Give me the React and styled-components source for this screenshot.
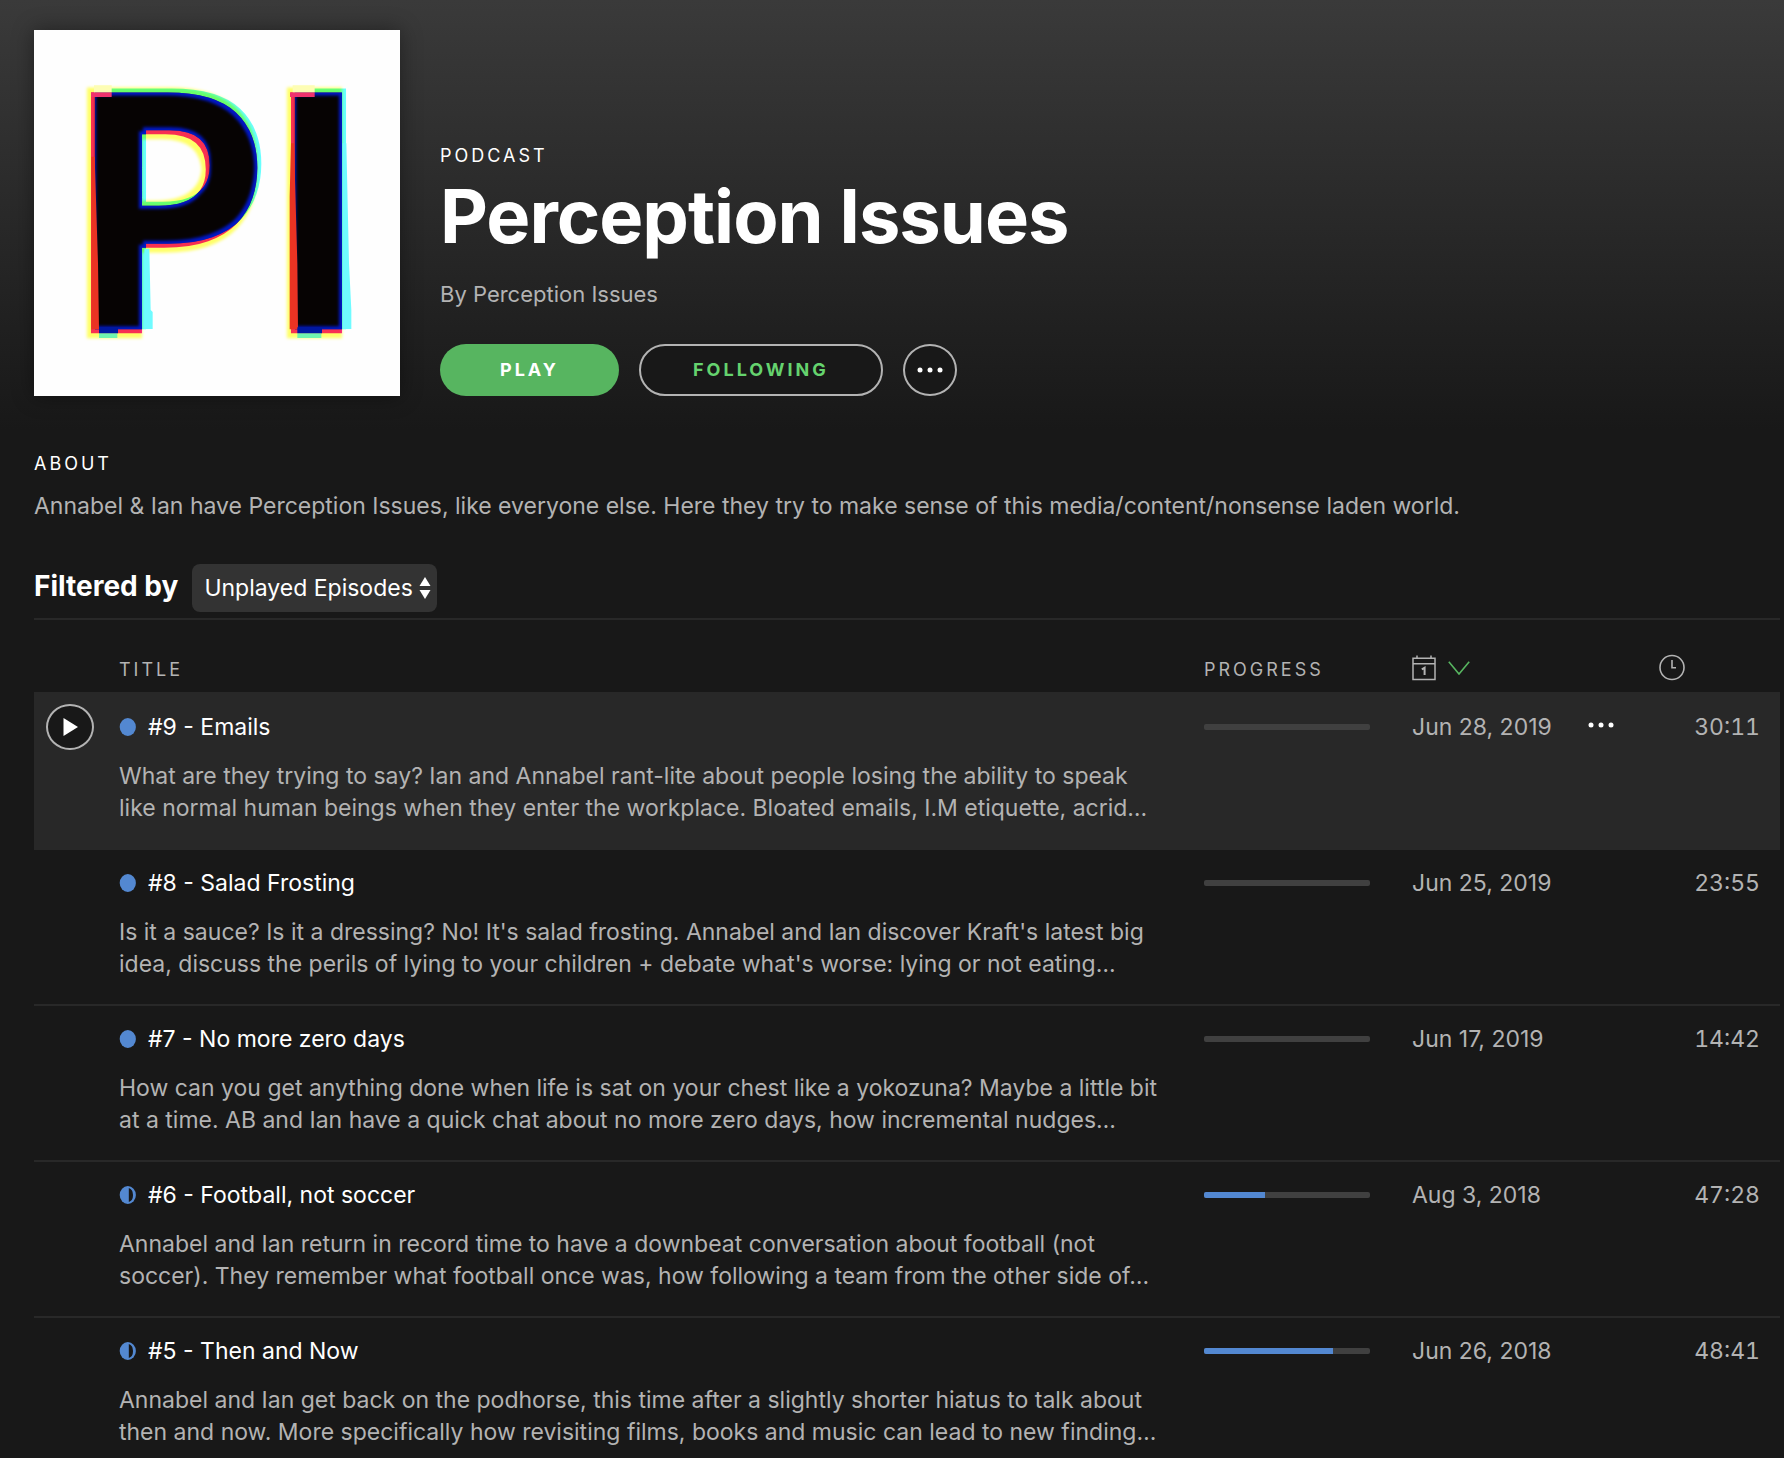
import React from 'react';
import styled, { createGlobalStyle } from 'styled-components';

const GlobalStyle = createGlobalStyle`
    * {
        box-sizing: border-box;
    }
    body {
        margin: 0;
        background-color: #181818;
        color: #b3b3b3;
        font-family: Inter, 'Liberation Sans', sans-serif;
        font-size: 23px;
        line-height: 32px;
    }
    h1, h2, p {
        margin: 0;
    }
    button, select {
        font: inherit;
        color: inherit;
        cursor: pointer;
    }
    svg {
        display: block;
    }
`;

const Page = styled.main`
    padding: 30px 4px 0 34px;
    background: linear-gradient(#3a3a3a, #181818 430px);
`;

const Header = styled.header`
    display: flex;
    align-items: flex-end;
    gap: 40px;
`;

const Artwork = styled.svg`
    width: 366px;
    height: 366px;
    flex: none;
    overflow: visible;
    background-color: #fefefe;
    box-shadow: 0 0 20px rgba(0, 0, 0, 0.4);
`;

const Monogram = styled.text`
    font-family: 'Open Sans', sans-serif;
    font-size: 1012px;
    font-weight: 700;
`;

const Label = styled.p`
    color: white;
    font-size: 18px;
    line-height: 24px;
    font-weight: 400;
    letter-spacing: 3px;
    text-transform: uppercase;
`;

const ShowTitle = styled.h1`
    margin-top: 4px;
    color: white;
    font-size: 74px;
    line-height: 88px;
    font-weight: 700;
    letter-spacing: -1px;
`;

const Author = styled.p`
    margin-top: 18px;
    font-size: 22px;
`;

const Actions = styled.div`
    display: flex;
    gap: 20px;
    margin-top: 34px;
`;

const PillButton = styled.button`
    height: 52px;
    padding: 0 ${(props) => (props.$outlined ? 52 : 60)}px;
    border: ${(props) => (props.$outlined ? '2px solid #b3b3b3' : 'none')};
    border-radius: 26px;
    background-color: ${(props) => (props.$outlined ? '#181818' : '#57b560')};
    color: ${(props) => (props.$outlined ? '#65d36e' : 'white')};
    font-size: 18px;
    font-weight: 700;
    letter-spacing: 3px;
    text-transform: uppercase;
`;

const RoundButton = styled.button`
    display: flex;
    align-items: center;
    justify-content: center;
    width: ${(props) => props.$width}px;
    height: ${(props) => props.$height}px;
    padding: 0;
    border: 2px solid #b3b3b3;
    border-radius: 50%;
    background-color: #181818;
    color: white;
`;

const PlainButton = styled.button`
    display: flex;
    align-items: center;
    height: 28px;
    padding: 0;
    border: none;
    background: none;
    color: white;
`;

const About = styled.section`
    margin-top: 56px;
`;

const AboutText = styled.p`
    margin-top: 14px;
`;

const FilterBar = styled.div`
    display: flex;
    align-items: baseline;
    gap: 14px;
    margin-top: 42px;
    padding-bottom: 6px;
    border-bottom: 2px solid #282828;
`;

const FilterLabel = styled.label`
    color: white;
    font-size: 28px;
    font-weight: 700;
`;

const SelectBox = styled.div`
    display: grid;
    align-items: center;
    justify-items: end;

    & > * {
        grid-area: 1 / 1;
    }
    & > svg {
        margin-right: 6px;
        pointer-events: none;
    }
`;

const Select = styled.select`
    appearance: none;
    height: 48px;
    padding: 0 24px 0 12px;
    border: none;
    border-radius: 8px;
    background-color: #333333;
    color: white;
`;

const Table = styled.table`
    width: 100%;
    table-layout: fixed;
    border-collapse: separate;
    border-spacing: 0;
`;

const Col = styled.col`
    width: ${(props) => props.$width};
`;

const HeadCell = styled.th`
    height: 72px;
    padding: 0 0 10px;
    vertical-align: bottom;
    text-align: left;
    font-size: 18px;
    line-height: 24px;
    font-weight: 400;
    letter-spacing: 3px;
    text-transform: uppercase;
`;

const SortButton = styled(PlainButton)`
    gap: 12px;
    color: #b3b3b3;
`;

const Row = styled.tr`
    background-color: ${(props) => (props.$active ? '#282828' : 'transparent')};
`;

const Cell = styled.td`
    height: 156px;
    padding: 17px 0 24px;
    border-top: 2px solid ${(props) => (props.$first ? 'transparent' : '#282828')};
    vertical-align: top;
`;

const PlayCell = styled(Cell)`
    padding: 10px 0 0 12px;
`;

const TimeCell = styled(Cell)`
    padding-right: 20px;
    text-align: right;
    font-variant-numeric: tabular-nums;
`;

const EpisodeTitle = styled.div`
    display: flex;
    align-items: center;
    gap: 12px;
    color: white;
`;

const Description = styled.p`
    margin-top: 17px;
    white-space: pre;
`;

const ProgressSlot = styled.div`
    display: flex;
    align-items: center;
    height: 32px;
`;

const Track = styled.div`
    width: 166px;
    height: 6px;
    border-radius: 2px;
    background-color: #404040;
    overflow: hidden;
`;

const Fill = styled.div`
    height: 100%;
    background-color: #5388d1;
`;

const episodes = [
    {
        title: '#9 - Emails',
        text: 'What are they trying to say? Ian and Annabel rant-lite about people losing the ability to speak\nlike normal human beings when they enter the workplace. Bloated emails, I.M etiquette, acrid…',
        progress: 0,
        date: 'Jun 28, 2019',
        time: '30:11',
        active: true,
    },
    {
        title: '#8 - Salad Frosting',
        text: "Is it a sauce? Is it a dressing? No! It's salad frosting. Annabel and Ian discover Kraft's latest big\nidea, discuss the perils of lying to your children + debate what's worse: lying or not eating…",
        progress: 0,
        date: 'Jun 25, 2019',
        time: '23:55',
    },
    {
        title: '#7 - No more zero days',
        text: 'How can you get anything done when life is sat on your chest like a yokozuna? Maybe a little bit\nat a time. AB and Ian have a quick chat about no more zero days, how incremental nudges…',
        progress: 0,
        date: 'Jun 17, 2019',
        time: '14:42',
    },
    {
        title: '#6 - Football, not soccer',
        text: 'Annabel and Ian return in record time to have a downbeat conversation about football (not\nsoccer). They remember what football once was, how following a team from the other side of…',
        progress: 37,
        date: 'Aug 3, 2018',
        time: '47:28',
    },
    {
        title: '#5 - Then and Now',
        text: 'Annabel and Ian get back on the podhorse, this time after a slightly shorter hiatus to talk about\nthen and now. More specifically how revisiting films, books and music can lead to new finding…',
        progress: 78,
        date: 'Jun 26, 2018',
        time: '48:41',
    },
];

// The filter prints the letters in yellow, magenta and cyan, slightly out of register
const CoverArt = () => (
    <Artwork viewBox="0 0 1098 1098" role="img" aria-label="Perception Issues cover">
        <filter
            id="misprint"
            filterUnits="userSpaceOnUse"
            x="0"
            y="0"
            width="1098"
            height="1098"
            colorInterpolationFilters="sRGB"
        >
            <feMorphology in="SourceAlpha" operator="dilate" radius="6 16" result="grown" />
            <feOffset in="grown" dx="-5" result="grownLeft" />
            <feGaussianBlur in="grownLeft" stdDeviation="4" result="glow" />
            <feFlood floodColor="#ffff68" />
            <feComposite in2="glow" operator="in" result="yellow" />

            <feFlood floodColor="#f830c8" />
            <feComposite in2="SourceAlpha" operator="in" result="magenta" />

            <feOffset in="SourceAlpha" dx="13" dy="-13" result="shifted" />
            <feFlood floodColor="#68ffff" />
            <feComposite in2="shifted" operator="in" result="cyan" />

            <feComposite in="SourceAlpha" in2="shifted" operator="in" result="overlap" />
            <feFlood floodColor="#0018c8" />
            <feComposite in2="overlap" operator="in" result="blue" />

            <feMorphology in="overlap" operator="erode" radius="5 10" result="inner" />
            <feOffset in="inner" dx="-4" result="innerLeft" />
            <feGaussianBlur in="innerLeft" stdDeviation="4" result="soft" />
            <feFlood floodColor="#060303" />
            <feComposite in2="soft" operator="in" result="black" />

            <feBlend in="magenta" in2="yellow" mode="multiply" result="warm" />
            <feBlend in="cyan" in2="warm" mode="multiply" result="inks" />
            <feMerge>
                <feMergeNode in="inks" />
                <feMergeNode in="blue" />
                <feMergeNode in="black" />
            </feMerge>
        </filter>
        <Monogram x="80 680" y="910" filter="url(#misprint)">PI</Monogram>
        <path
            fill="#ea3323"
            d="M172 380H182L192 700L195 898H172ZM771 340H780L790 700L792 898H767V500Z"
        />
        <path
            fill="#6ffbff"
            d="M331 656H346L350 840L356 846V897H331ZM926 340H937L945 700L952 840V897H926Z"
        />
        <path fill="#f0326e" d="M171 187H233V201H171ZM768 187H842V201H768Z" />
        <path fill="#fdfdb4" d="M180 166H233V187H180ZM776 166H842V187H776Z" />
        <path fill="#70f5b0" d="M195 910H250V924H195ZM790 910H862V924H790Z" />
        <path fill="#0018a0" d="M195 892H252V910H195ZM790 892H864V910H790Z" />
    </Artwork>
);

const Dots = () => (
    <svg width="26" height="6" viewBox="0 0 26 6" fill="currentColor">
        <circle cx="3" cy="3" r="2.5" />
        <circle cx="13" cy="3" r="2.5" />
        <circle cx="23" cy="3" r="2.5" />
    </svg>
);

const StatusDot = ({ started }) => (
    <svg width="17" height="18" viewBox="0 0 17 18">
        <ellipse cx="8.8" cy="9" rx="8.1" ry="9" fill="#5388d1" />
        {started && <path d="M9.8 2A5.5 7.2 0 0 1 9.8 16Z" fill="#181818" />}
    </svg>
);

const PlayIcon = () => (
    <svg width="16" height="18" viewBox="0 0 16 18" fill="currentColor">
        <path d="M1.5 0L16 9L1.5 18Z" />
    </svg>
);

const SelectArrows = () => (
    <svg width="12" height="22" viewBox="0 0 12 22" fill="white">
        <path d="M6 0L11.5 9H0.5Z" />
        <path d="M6 22L11.5 13H0.5Z" />
    </svg>
);

const CalendarIcon = () => (
    <svg width="24" height="26" viewBox="0 0 24 26" fill="none" stroke="#b3b3b3" strokeWidth="1.5">
        <path d="M1 3.2H23V24.4H1ZM1 8.8H23M5 0.5V3.2M19 0.5V3.2" />
        <path d="M9.8 14.4L12.6 12.8V20" strokeWidth="2" />
    </svg>
);

const ChevronIcon = () => (
    <svg width="22" height="14" viewBox="0 0 22 14" fill="none" stroke="#57b560" strokeWidth="1.6">
        <path d="M0.8 0.8L11 13L21.2 0.8" />
    </svg>
);

const ClockIcon = () => (
    <svg width="26" height="28" viewBox="0 0 26 28" fill="none" stroke="#b3b3b3" strokeWidth="1.6">
        <circle cx="13" cy="13.5" r="12" />
        <path d="M13 6V13.8H17" />
    </svg>
);

const Episode = ({ episode, first }) => (
    <Row $active={episode.active}>
        <PlayCell $first={first}>
            {episode.active && (
                <RoundButton $width={48} $height={46} aria-label="Play episode">
                    <PlayIcon />
                </RoundButton>
            )}
        </PlayCell>
        <Cell $first={first}>
            <EpisodeTitle>
                <StatusDot started={episode.progress > 0} />
                {episode.title}
            </EpisodeTitle>
            <Description>{episode.text}</Description>
        </Cell>
        <Cell $first={first}>
            <ProgressSlot>
                <Track>
                    <Fill style={{ width: `${episode.progress}%` }} />
                </Track>
            </ProgressSlot>
        </Cell>
        <Cell $first={first}>{episode.date}</Cell>
        <Cell $first={first}>
            {episode.active && (
                <PlainButton aria-label="More options">
                    <Dots />
                </PlainButton>
            )}
        </Cell>
        <TimeCell $first={first}>{episode.time}</TimeCell>
    </Row>
);

const App = () => {
    return (
        <>
            <GlobalStyle />
            <Page>
                <Header>
                    <CoverArt />
                    <div>
                        <Label>Podcast</Label>
                        <ShowTitle>Perception Issues</ShowTitle>
                        <Author>By Perception Issues</Author>
                        <Actions>
                            <PillButton>Play</PillButton>
                            <PillButton $outlined>Following</PillButton>
                            <RoundButton $width={54} $height={52} aria-label="More">
                                <Dots />
                            </RoundButton>
                        </Actions>
                    </div>
                </Header>
                <About>
                    <Label as="h2">About</Label>
                    <AboutText>
                        Annabel &amp; Ian have Perception Issues, like everyone else. Here they try to make sense of this media/content/nonsense laden world.
                    </AboutText>
                </About>
                <FilterBar>
                    <FilterLabel htmlFor="filter">Filtered by</FilterLabel>
                    <SelectBox>
                        <Select id="filter" defaultValue="unplayed">
                            <option value="all">All Episodes</option>
                            <option value="unplayed">Unplayed Episodes</option>
                        </Select>
                        <SelectArrows />
                    </SelectBox>
                </FilterBar>
                <Table>
                    <colgroup>
                        <Col $width="85px" />
                        <Col $width="auto" />
                        <Col $width="208px" />
                        <Col $width="176px" />
                        <Col $width="71px" />
                        <Col $width="121px" />
                    </colgroup>
                    <thead>
                        <tr>
                            <HeadCell aria-label="Play" />
                            <HeadCell>Title</HeadCell>
                            <HeadCell>Progress</HeadCell>
                            <HeadCell>
                                <SortButton aria-label="Sort by date">
                                    <CalendarIcon />
                                    <ChevronIcon />
                                </SortButton>
                            </HeadCell>
                            <HeadCell aria-label="Options" />
                            <HeadCell aria-label="Duration">
                                <ClockIcon />
                            </HeadCell>
                        </tr>
                    </thead>
                    <tbody>
                        {episodes.map((episode, index) => (
                            <Episode key={episode.title} episode={episode} first={index === 0} />
                        ))}
                    </tbody>
                </Table>
            </Page>
        </>
    );
};

export default App;
